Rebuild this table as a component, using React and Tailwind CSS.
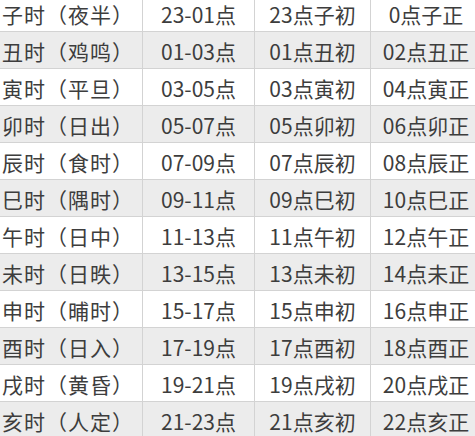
import React from "react";

const rows = [
  ["子时（夜半）", "23-01点", "23点子初", "0点子正"],
  ["丑时（鸡鸣）", "01-03点", "01点丑初", "02点丑正"],
  ["寅时（平旦）", "03-05点", "03点寅初", "04点寅正"],
  ["卯时（日出）", "05-07点", "05点卯初", "06点卯正"],
  ["辰时（食时）", "07-09点", "07点辰初", "08点辰正"],
  ["巳时（隅时）", "09-11点", "09点巳初", "10点巳正"],
  ["午时（日中）", "11-13点", "11点午初", "12点午正"],
  ["未时（日昳）", "13-15点", "13点未初", "14点未正"],
  ["申时（晡时）", "15-17点", "15点申初", "16点申正"],
  ["酉时（日入）", "17-19点", "17点酉初", "18点酉正"],
  ["戌时（黄昏）", "19-21点", "19点戌初", "20点戌正"],
  ["亥时（人定）", "21-23点", "21点亥初", "22点亥正"],
];

export default function App() {
  return (
    <div
      className="w-[475px] h-[436px] overflow-hidden bg-white text-[#3d3d3d] text-[21px]"
      style={{ fontFamily: '"Noto Sans CJK SC", sans-serif' }}
    >
      <div className="-mt-[5px] w-[481px]">
        {rows.map((r, i) => (
          <div
            key={i}
            className={
              "flex h-[37px] border-b border-[#d3d3d3] " +
              (i % 2 === 1 ? "bg-[#ececec]" : "bg-white")
            }
          >
            <div className="w-[143px] shrink-0 border-r border-[#d3d3d3] flex items-center pl-[2px] pt-[3px] leading-none whitespace-nowrap tracking-[1px]">
              {r[0]}
            </div>
            <div className="w-[112px] shrink-0 border-r border-[#d3d3d3] flex items-center justify-center pt-[3px] leading-none whitespace-nowrap">
              {r[1]}
            </div>
            <div className="w-[116px] shrink-0 border-r border-[#d3d3d3] flex items-center justify-center pt-[3px] leading-none whitespace-nowrap">
              {r[2]}
            </div>
            <div className="w-[110px] shrink-0 flex items-center justify-center pt-[3px] leading-none whitespace-nowrap">
              {r[3]}
            </div>
          </div>
        ))}
      </div>
    </div>
  );
}
